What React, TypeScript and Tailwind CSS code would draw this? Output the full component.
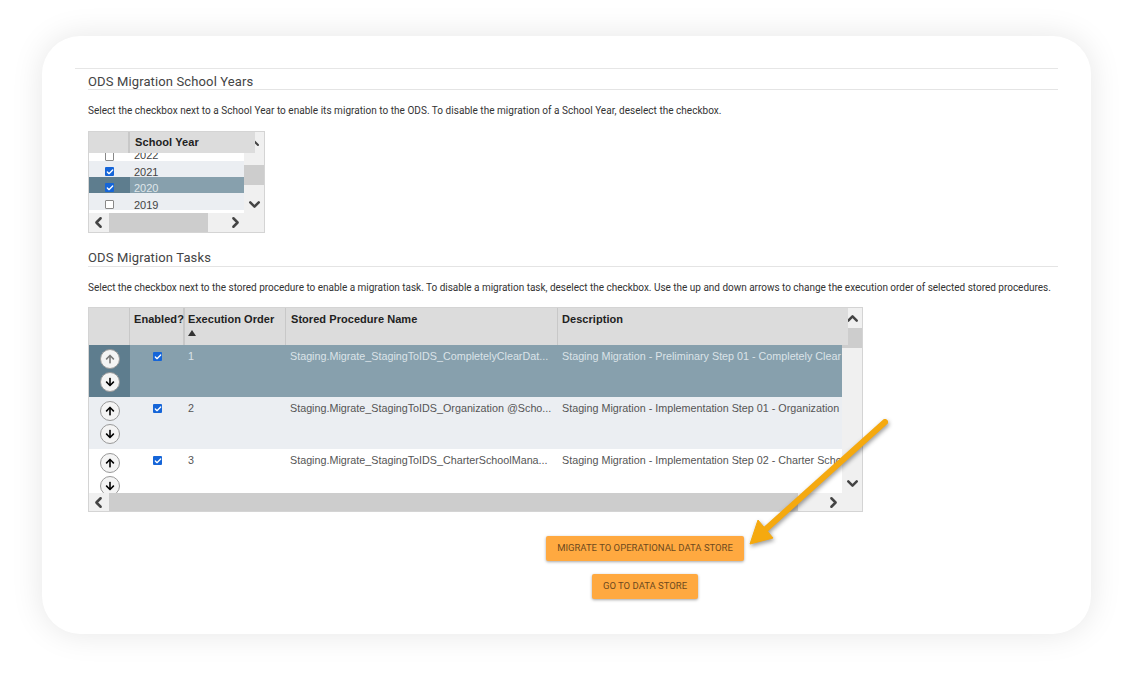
import { Check, ChevronDown, ChevronLeft, ChevronRight, ChevronUp } from 'lucide-react';
import { FaArrowDown, FaArrowUp } from 'react-icons/fa';

const years = [
  { label: '2022', checked: false, rowClass: 'h-[8px] bg-white items-end', textClass: 'text-[#444]', cellClass: 'items-end', labelClass: 'mb-[-1px]' },
  { label: '2021', checked: true, rowClass: 'h-[16px] bg-[#ebeef2] items-start', textClass: 'text-[#444]', cellClass: 'items-start pt-[6px]', labelClass: 'pt-[4px]' },
  { label: '2020', checked: true, rowClass: 'h-[16px] bg-[#87a0ad] items-start', textClass: 'text-[#dfe6ea]', cellClass: 'items-start pt-[6px] bg-[#5e7d8e]', labelClass: 'pt-[4px]' },
  { label: '2019', checked: false, rowClass: 'h-[17px] bg-[#ebeef2] items-start', textClass: 'text-[#444]', cellClass: 'items-start pt-[7px]', labelClass: 'pt-[5px]' },
];

const tasks = [
  {
    order: '1',
    proc: 'Staging.Migrate_StagingToIDS_CompletelyClearDat...',
    desc: 'Staging Migration - Preliminary Step 01 - Completely Clear',
    rowClass: 'h-[52px] bg-[#87a0ad] text-[#dbe3e8]',
    handleClass: 'bg-[#5e7d8e]',
    faded: true,
  },
  {
    order: '2',
    proc: 'Staging.Migrate_StagingToIDS_Organization @Scho...',
    desc: 'Staging Migration - Implementation Step 01 - Organization',
    rowClass: 'h-[52px] bg-[#ebeef2] text-[#555]',
    handleClass: '',
  },
  {
    order: '3',
    proc: 'Staging.Migrate_StagingToIDS_CharterSchoolMana...',
    desc: 'Staging Migration - Implementation Step 02 - Charter School',
    rowClass: 'h-[51px] bg-white text-[#555]',
    handleClass: '',
  },
];

function Box({ checked }: { checked: boolean }) {
  if (checked) {
    return (
      <span className="flex h-[9px] w-[9px] items-center justify-center rounded-[1px] bg-[#1565d8]">
        <Check size={8} strokeWidth={4} className="text-white" />
      </span>
    );
  }
  return <span className="block h-[9px] w-[9px] rounded-[1px] border border-[#888] bg-white" />;
}

function RoundButton({ down, faded }: { down?: boolean; faded?: boolean }) {
  const Icon = down ? FaArrowDown : FaArrowUp;
  const color = faded ? 'text-[#777]' : 'text-black';
  return (
    <span className="flex h-[20px] w-[20px] items-center justify-center rounded-full border border-[#999] bg-[#f4f4f4]">
      <Icon size={10} className={color} />
    </span>
  );
}

function OrangeButton({ label, width }: { label: string; width: string }) {
  return (
    <button className={`h-[25px] ${width} rounded-[2px] bg-[#ffa940] text-[9.5px] text-[#6e4a1e] uppercase shadow-[0_1px_3px_rgba(0,0,0,0.35)]`}>
      {label}
    </button>
  );
}

export default function App() {
  return (
    <div className="relative h-[682px] w-[1133px] overflow-hidden bg-white pt-[36px] pl-[42px] font-['Liberation_Sans',sans-serif]">
      <div className="h-[598px] w-[1049px] rounded-[38px] bg-white pt-[32px] pl-[33px] shadow-[0_0_32px_rgba(0,0,0,0.1)]">
        <div className="w-[983px] border-t border-[#e6e6e6] pl-[13px]">
          <h2 className="h-[21px] border-b border-[#e4e4e4] pt-[5px] font-['Roboto',sans-serif] text-[13px] leading-[16px] tracking-[0.13px] text-[#444]">
            ODS Migration School Years
          </h2>
          <p className="mt-[15px] font-['Roboto',sans-serif] text-[10px] leading-[12px] tracking-[0.03px] text-[#333]">
            Select the checkbox next to a School Year to enable its migration to the ODS. To disable the migration of a School Year, deselect the checkbox.
          </p>

          {/* school year grid */}
          <div className="relative mt-[14px] h-[102px] w-[177px] border border-[#d4d4d4] bg-[#f0f0f0]">
            <ChevronUp size={16} strokeWidth={3} className="absolute top-[3px] right-[2px] text-[#444]" />
            <div className="absolute top-0 left-0 z-10 flex h-[21px] w-[166px] bg-[#dcdcdc] text-[11px] font-bold tracking-[0.1px] text-[#222]">
              <div className="w-[41px] border-r-2 border-[#c8c8c8]" />
              <div className="pt-[3px] pl-[5px] leading-[14px]">School Year</div>
            </div>
            <div className="flex h-[81px]">
              <div className="w-[155px] bg-white pt-[21px]">
                {years.map((y) => (
                  <div key={y.label} className={`flex overflow-hidden text-[11px] ${y.rowClass} ${y.textClass}`}>
                    <div className={`flex h-full w-[41px] justify-center ${y.cellClass}`}>
                      <Box checked={y.checked} />
                    </div>
                    <div className={`pl-[4px] leading-[14px] ${y.labelClass}`}>{y.label}</div>
                  </div>
                ))}
              </div>
              <div className="flex w-[20px] flex-col items-center pt-[33px]">
                <div className="h-[20px] w-full bg-[#cdcdcd]" />
                <ChevronDown size={17} strokeWidth={3.5} className="mt-[11px] text-[#444]" />
              </div>
            </div>
            <div className="flex h-[19px] items-center">
              <div className="flex w-[20px] justify-center pr-[2px]">
                <ChevronLeft size={17} strokeWidth={3.5} className="text-[#444]" />
              </div>
              <div className="h-full w-[99px] bg-[#cdcdcd]" />
              <div className="flex w-[54px] justify-center">
                <ChevronRight size={17} strokeWidth={3.5} className="text-[#444]" />
              </div>
            </div>
          </div>

          <h2 className="mt-[17px] h-[17px] border-b border-[#e4e4e4] font-['Roboto',sans-serif] text-[13px] leading-[16px] tracking-[0.13px] text-[#444]">
            ODS Migration Tasks
          </h2>
          <p className="mt-[15px] font-['Roboto',sans-serif] text-[10px] leading-[12px] tracking-[-0.015px] whitespace-nowrap text-[#333]">
            Select the checkbox next to the stored procedure to enable a migration task. To disable a migration task, deselect the checkbox. Use the up and down arrows to change the execution order of selected stored procedures.
          </p>

          {/* tasks grid */}
          <div className="relative mt-[13px] h-[205px] w-[775px] border border-[#d4d4d4] bg-[#f0f0f0]">
            <ChevronUp size={17} strokeWidth={3.5} className="absolute top-[2px] right-[1px] text-[#444]" />
            <div className="absolute top-0 left-0 z-10 flex h-[37px] w-[759px] bg-[#dcdcdc] text-[11px] leading-[14px] font-bold tracking-[0.05px] text-[#222]">
              <div className="w-[41px] border-r border-[#c8c8c8]" />
              <div className="w-[55px] border-r-2 border-[#c8c8c8] pt-[4px] pl-[4px] whitespace-nowrap">Enabled?</div>
              <div className="w-[101px] border-r border-[#c8c8c8] pt-[4px] pl-[3px]">
                <div>Execution Order</div>
                <svg width="8" height="6" viewBox="0 0 8 6" className="mt-[4px]">
                  <path d="M0 6 L4 0 L8 6 Z" fill="#333" />
                </svg>
              </div>
              <div className="w-[272px] border-r border-[#c8c8c8] pt-[4px] pl-[5px]">Stored Procedure Name</div>
              <div className="pt-[4px] pl-[4px]">Description</div>
            </div>
            <div className="flex h-[185px]">
              <div className="w-[753px] overflow-hidden bg-white pt-[37px]">
                {tasks.map((t) => (
                  <div key={t.order} className={`flex text-[10.75px] leading-[14px] ${t.rowClass}`}>
                    <div className={`flex h-full w-[41px] flex-col items-center gap-[3px] pt-[4px] ${t.handleClass}`}>
                      <RoundButton faded={t.faded} />
                      <RoundButton down />
                    </div>
                    <div className="flex w-[55px] justify-center pt-[7px]">
                      <Box checked />
                    </div>
                    <div className="w-[101px] pt-[4px] pl-[3px]">{t.order}</div>
                    <div className="w-[272px] pt-[4px] pl-[4px] whitespace-nowrap">{t.proc}</div>
                    <div className="flex-1 overflow-hidden pt-[4px] pl-[4px] whitespace-nowrap">{t.desc}</div>
                  </div>
                ))}
              </div>
              <div className="flex w-[20px] flex-col items-center pt-[20px]">
                <div className="h-[20px] w-full bg-[#cdcdcd]" />
                <ChevronDown size={17} strokeWidth={3.5} className="mt-[127px] text-[#444]" />
              </div>
            </div>
            <div className="flex h-[18px] items-center">
              <div className="flex w-[20px] justify-center pr-[2px]">
                <ChevronLeft size={17} strokeWidth={3.5} className="text-[#444]" />
              </div>
              <div className="h-full w-[689px] bg-[#cdcdcd]" />
              <div className="flex flex-1 justify-center pl-[6px]">
                <ChevronRight size={17} strokeWidth={3.5} className="text-[#444]" />
              </div>
            </div>
          </div>

          <div className="mt-[24px] flex w-[970px] flex-col items-center gap-[13px] pl-[144px] font-['Roboto',sans-serif]">
            <OrangeButton label="Migrate to Operational Data Store" width="w-[198px]" />
            <OrangeButton label="Go to Data Store" width="w-[106px]" />
          </div>
        </div>
      </div>

      {/* callout arrow */}
      <svg width="1133" height="682" viewBox="0 0 1133 682" className="pointer-events-none absolute top-0 left-0 z-20 drop-shadow-[1px_2px_2px_rgba(0,0,0,0.4)]">
        <path d="M885 422 L766 529" stroke="#f5a90f" strokeWidth="6" strokeLinecap="round" fill="none" />
        <path d="M750 544 L758 520 L773 538 Z" fill="#f5a90f" stroke="#f5a90f" strokeWidth="1" />
      </svg>
    </div>
  );
}
